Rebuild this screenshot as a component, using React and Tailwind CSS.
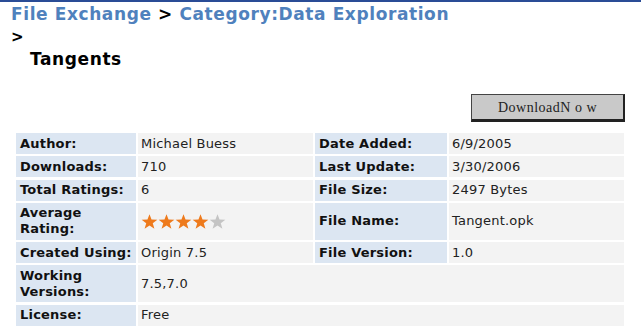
import React from 'react';

const FONT = { fontFamily: 'Verdana, "DejaVu Sans", sans-serif' };

function Star({ on }) {
  return (
    <svg width="17" height="15" viewBox="0 0 24 22" className="block">
      <polygon
        points="12,0.5 15,8.2 23.5,8.4 16.8,13.6 19.2,21.8 12,17 4.8,21.8 7.2,13.6 0.5,8.4 9,8.2"
        fill={on ? '#ee7a1c' : '#c4c4c4'}
      />
    </svg>
  );
}

function Label({ children, className = '' }) {
  return (
    <div className={`bg-[#dce6f2] flex items-center pl-[4px] pr-1 font-bold text-[13px] leading-[16px] tracking-[0.2px] text-[#111] ${className}`}>
      {children}
    </div>
  );
}

function Value({ children, className = '' }) {
  return (
    <div className={`bg-[#f3f3f3] flex items-center pl-[3px] text-[13px] leading-[16px] tracking-[0.2px] text-[#222] ${className}`}>
      {children}
    </div>
  );
}

export default function App() {
  return (
    <div className="w-[641px] h-[328px] bg-white overflow-hidden" style={FONT}>
      <div className="h-[2px] bg-[#2a4c96]" />

      {/* breadcrumb */}
      <div className="pl-[11px] pt-[1px] text-[17px] font-bold leading-[22px] tracking-[0.6px]">
        <div className="whitespace-nowrap">
          <span className="text-[#4f81bd]">File Exchange</span>
          <span className="text-black"> &gt; </span>
          <span className="text-[#4f81bd]">Category:Data Exploration</span>
        </div>
        <div className="text-black text-[15px] leading-[24px]">&gt;</div>
        <div className="pl-[19px] text-black leading-[20px]">Tangents</div>
      </div>

      {/* download button */}
      <div className="flex justify-end pr-[16px] mt-[25px]">
        <button
          className="w-[154px] h-[28px] bg-[#c9c9c9] border-t border-l border-[#444] border-r-[2px] border-b-[3px] border-r-[#222] border-b-[#222] text-[14px] text-[#222] tracking-[0.5px] flex items-center justify-center"
          style={{ fontFamily: '"Liberation Serif", "DejaVu Serif", serif' }}
        >
          DownloadN o w
        </button>
      </div>

      {/* info table */}
      <div className="mt-[11px] ml-[16px] grid grid-cols-[120px_175px_132px_175px] grid-rows-[21px_21px_21px_37px_21px_37px_21px] gap-x-[2px] gap-y-[2.3px]">
        <Label>Author:</Label>
        <Value>Michael Buess</Value>
        <Label>Date Added:</Label>
        <Value>6/9/2005</Value>

        <Label>Downloads:</Label>
        <Value>710</Value>
        <Label>Last Update:</Label>
        <Value>3/30/2006</Value>

        <Label className="whitespace-nowrap">Total Ratings:</Label>
        <Value>6</Value>
        <Label>File Size:</Label>
        <Value>2497 Bytes</Value>

        <Label>Average<br />Rating:</Label>
        <Value>
          <div className="flex">
            <Star on />
            <Star on />
            <Star on />
            <Star on />
            <Star />
          </div>
        </Value>
        <Label>File Name:</Label>
        <Value>Tangent.opk</Value>

        <Label className="whitespace-nowrap">Created Using:</Label>
        <Value>Origin 7.5</Value>
        <Label>File Version:</Label>
        <Value>1.0</Value>

        <Label>Working<br />Versions:</Label>
        <Value className="col-span-3">7.5,7.0</Value>

        <Label>License:</Label>
        <Value className="col-span-3">Free</Value>
      </div>
    </div>
  );
}
